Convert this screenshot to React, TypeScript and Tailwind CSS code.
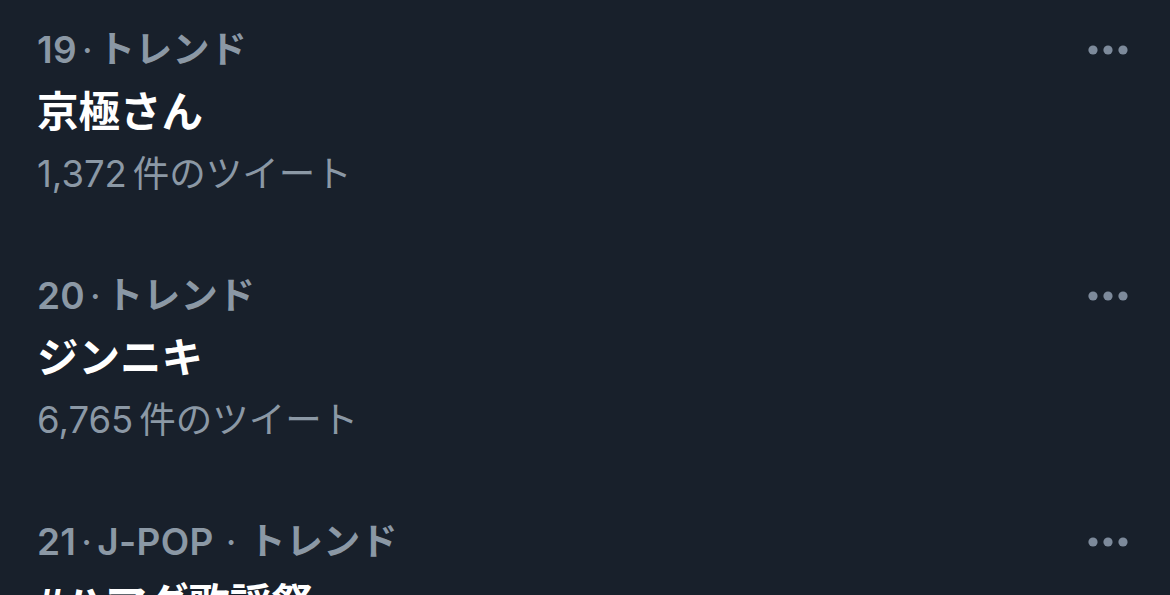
type Trend = {
  rank: number;
  category?: string;
  title: string;
  count?: string;
};

const TRENDS: Trend[] = [
  { rank: 19, title: '京極さん', count: '1,372' },
  { rank: 20, title: 'ジンニキ', count: '6,765' },
  { rank: 21, category: 'J-POP', title: '#ハマダ歌謡祭' },
];

const FONT = "font-['Inter','Noto_Sans_CJK_JP',sans-serif]";

function MoreDots() {
  return (
    <svg width="44" height="12" viewBox="0 0 44 12" fill="currentColor">
      <circle cx="6" cy="6" r="4.6" />
      <circle cx="21" cy="6" r="4.6" />
      <circle cx="36" cy="6" r="4.6" />
    </svg>
  );
}

function TrendRow({ trend }: { trend: Trend }) {
  return (
    <div className="flex items-start justify-between pl-[37px] pr-[39px] pt-[19px] pb-[41px]">
      <div className="flex flex-col">
        <div className="flex items-center h-[62px] text-[37px] font-semibold text-[#8b98a5] tracking-[0.3px]">
          <span>{trend.rank}</span>
          <span className="mx-[5px] font-normal">·</span>
          {trend.category && (
            <>
              <span>{trend.category}</span>
              <span className="mx-[12px] font-normal">·</span>
            </>
          )}
          <span>トレンド</span>
        </div>
        <div className="flex items-center h-[62px] text-[41.5px] font-bold text-white">
          {trend.title}
        </div>
        {trend.count && (
          <div className="flex items-center h-[62px] text-[36.5px] font-normal text-[#8b98a5]">
            <span className="mr-[6px]">{trend.count}</span>
            <span>件のツイート</span>
          </div>
        )}
      </div>
      <div className="flex items-center h-[62px] text-[#7d8a9b]">
        <MoreDots />
      </div>
    </div>
  );
}

export default function App() {
  return (
    <div className={`w-[1170px] h-[595px] overflow-hidden bg-[#18202b] ${FONT}`}>
      {TRENDS.map((t) => (
        <TrendRow key={t.rank} trend={t} />
      ))}
    </div>
  );
}
